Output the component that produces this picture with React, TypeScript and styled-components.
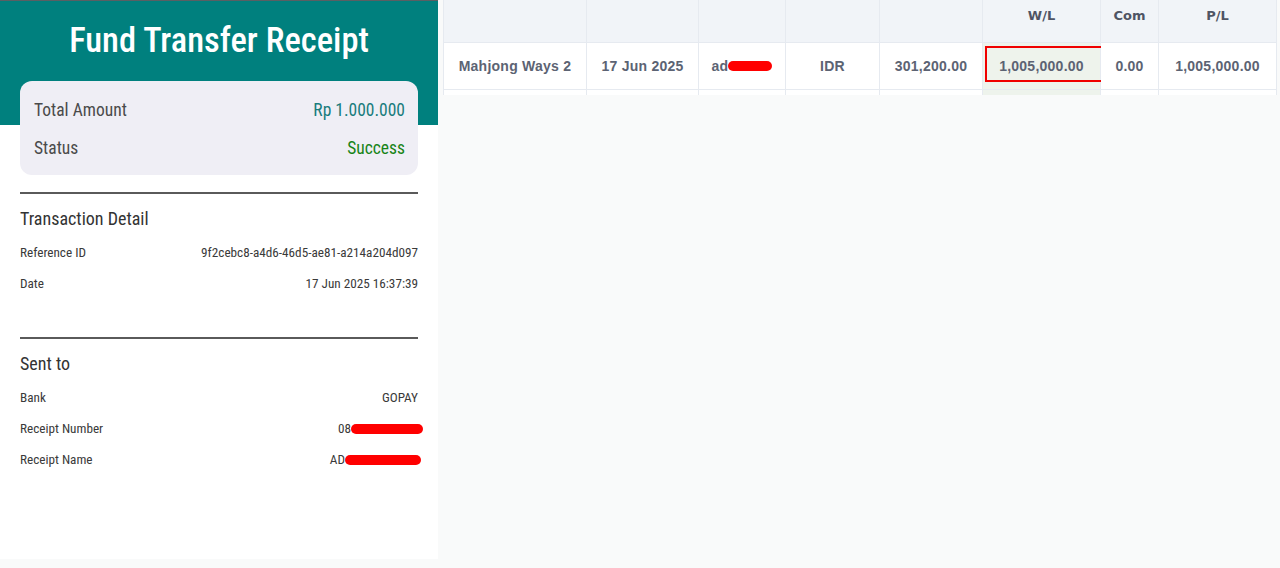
import styled, { createGlobalStyle } from 'styled-components'

const GlobalStyle = createGlobalStyle`
  html, body {
    margin: 0;
    padding: 0;
    background: #f9fafa;
  }
  body {
    font-family: 'Liberation Sans', Arial, sans-serif;
  }
`

const Page = styled.div`
  display: flex;
  align-items: flex-start;
  gap: 5px;
  width: 1280px;
  height: 568px;
  overflow: hidden;
`

// receipt side
const Receipt = styled.div`
  width: 438px;
  height: 559px;
  flex-shrink: 0;
  box-sizing: border-box;
  border-top: 1px solid #5b5f63;
  background: linear-gradient(#00807e 0, #00807e 124px, #ffffff 124px);
  padding: 0 20px;
  font-family: 'Roboto Condensed', 'DejaVu Sans Condensed', 'Liberation Sans Narrow', Roboto, sans-serif;
  font-stretch: 75%;
  color: #3d3d3d;
`

const Title = styled.h1`
  margin: 0;
  height: 80px;
  display: flex;
  align-items: center;
  justify-content: center;
  padding-bottom: 2px;
  box-sizing: border-box;
  color: #ffffff;
  font-size: 34.5px;
  font-weight: 500;
`

const SummaryCard = styled.div`
  background: #efeef5;
  border-radius: 12px;
  padding: 10px 13px 8px 14px;
  display: flex;
  flex-direction: column;
`

const SummaryRow = styled.div`
  display: flex;
  justify-content: space-between;
  align-items: center;
  height: 38px;
  font-size: 17.5px;
  color: #4a4a4a;
`

const SummaryValue = styled.span<{ $tone: 'teal' | 'green' }>`
  color: ${({ $tone }) => ($tone === 'teal' ? '#187c7c' : '#178417')};
`

const Divider = styled.hr`
  margin: 17px 0 0;
  border: 0;
  border-top: 2px solid #5a5a5a;
`

const Section = styled.section<{ $minHeight: number }>`
  min-height: ${({ $minHeight }) => $minHeight}px;
`

const SectionTitle = styled.h2`
  margin: 0;
  height: 43px;
  padding-top: 5px;
  box-sizing: border-box;
  display: flex;
  align-items: center;
  font-size: 18px;
  font-weight: 400;
  color: #333;
`

const DetailRow = styled.div`
  display: flex;
  justify-content: space-between;
  align-items: center;
  height: 31px;
  font-size: 13.2px;
  color: #3a3a3a;
`

const Masked = styled.span`
  display: inline-flex;
  align-items: center;
`

const Redact = styled.span<{ $w: number; $overhang?: number }>`
  display: inline-block;
  width: ${({ $w }) => $w}px;
  height: 10px;
  border-radius: 5px;
  background: #ff0000;
  margin-right: ${({ $overhang }) => -($overhang ?? 0)}px;
`

// table side
const TableWrap = styled.div`
  height: 95px;
  overflow: hidden;
`

const Table = styled.table`
  border-collapse: collapse;
  table-layout: fixed;
  width: 833px;
  font-family: 'Liberation Sans', Arial, sans-serif;
`

const HeadCell = styled.th`
  height: 42px;
  padding: 8px 0 0;
  box-sizing: border-box;
  vertical-align: top;
  background: #f1f4f8;
  border: 1px solid #e6eaf0;
  border-top: 0;
  font-family: 'DejaVu Sans', sans-serif;
  font-size: 13px;
  font-weight: 700;
  color: #4f5464;
`

const Cell = styled.td<{ $hl?: boolean }>`
  position: relative;
  height: 47px;
  padding: 0;
  box-sizing: border-box;
  text-align: center;
  background: ${({ $hl }) => ($hl ? '#eef3ec' : '#ffffff')};
  border: 1px solid #e6eaf0;
  font-size: 14px;
  font-weight: 700;
  letter-spacing: 0.25px;
  color: #5c6373;
`

const CellInner = styled.span`
  display: inline-flex;
  align-items: center;
`

const Marker = styled.span`
  position: absolute;
  top: 3px;
  left: 2px;
  right: -3px;
  height: 36px;
  box-sizing: border-box;
  border: 2px solid #f00000;
`

const cols = [143, 112, 87, 94, 103, 118, 58, 118]
const heads = ['', '', '', '', '', 'W/L', 'Com', 'P/L']

export default function App() {
  return (
    <>
      <GlobalStyle />
      <Page>
        <Receipt>
          <Title>Fund Transfer Receipt</Title>
          <SummaryCard>
            <SummaryRow>
              <span>Total Amount</span>
              <SummaryValue $tone="teal">Rp 1.000.000</SummaryValue>
            </SummaryRow>
            <SummaryRow>
              <span>Status</span>
              <SummaryValue $tone="green">Success</SummaryValue>
            </SummaryRow>
          </SummaryCard>

          <Divider />
          <Section $minHeight={126}>
            <SectionTitle>Transaction Detail</SectionTitle>
            <DetailRow>
              <span>Reference ID</span>
              <span>9f2cebc8-a4d6-46d5-ae81-a214a204d097</span>
            </DetailRow>
            <DetailRow>
              <span>Date</span>
              <span>17 Jun 2025 16:37:39</span>
            </DetailRow>
          </Section>

          <Divider />
          <Section $minHeight={140}>
            <SectionTitle>Sent to</SectionTitle>
            <DetailRow>
              <span>Bank</span>
              <span>GOPAY</span>
            </DetailRow>
            <DetailRow>
              <span>Receipt Number</span>
              <Masked>
                08
                <Redact $w={72} $overhang={5} />
              </Masked>
            </DetailRow>
            <DetailRow>
              <span>Receipt Name</span>
              <Masked>
                AD
                <Redact $w={76} $overhang={3} />
              </Masked>
            </DetailRow>
          </Section>
        </Receipt>

        <TableWrap>
          <Table>
            <colgroup>
              {cols.map((w, i) => (
                <col key={i} style={{ width: w }} />
              ))}
            </colgroup>
            <thead>
              <tr>
                {heads.map((h, i) => (
                  <HeadCell key={i}>{h}</HeadCell>
                ))}
              </tr>
            </thead>
            <tbody>
              <tr>
                <Cell>Mahjong Ways 2</Cell>
                <Cell>17 Jun 2025</Cell>
                <Cell>
                  <CellInner>
                    ad
                    <Redact $w={44} />
                  </CellInner>
                </Cell>
                <Cell>IDR</Cell>
                <Cell>301,200.00</Cell>
                <Cell $hl>
                  <Marker />
                  1,005,000.00
                </Cell>
                <Cell>0.00</Cell>
                <Cell>1,005,000.00</Cell>
              </tr>
              <tr>
                {cols.map((_, i) => (
                  <Cell key={i} $hl={i === 5} />
                ))}
              </tr>
            </tbody>
          </Table>
        </TableWrap>
      </Page>
    </>
  )
}
